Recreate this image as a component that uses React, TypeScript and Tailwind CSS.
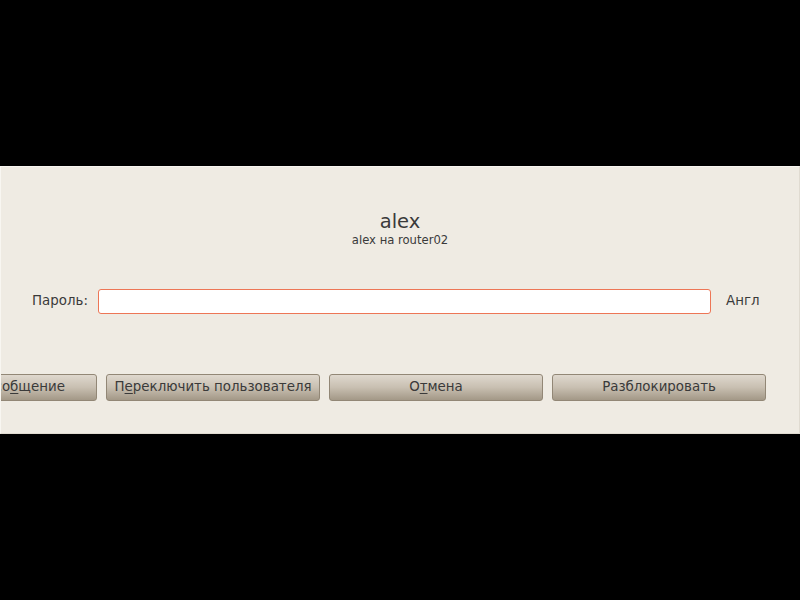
export default function App() {
  const font = { fontFamily: '"DejaVu Sans", "Liberation Sans", sans-serif' };
  const btn =
    "shrink-0 w-[214px] h-[27px] rounded-[3px] border border-[#928776] bg-gradient-to-b from-[#dfd8ce] via-[#c8bfb1] to-[#a39887] text-[13.4px] text-[#3a3a3a] flex items-center justify-center whitespace-nowrap";

  return (
    <div className="w-[800px] h-[600px] bg-black overflow-hidden" style={font}>
      <div className="h-[166px]" />
      <div className="h-[268px] bg-[#efebe3] border-t border-l border-[#f8f6f1] border-r border-b border-r-[#e0dbd1] border-b-[#e0dbd1] overflow-hidden flex flex-col">
        <div className="mt-[44px] text-center text-[19.5px] leading-[22px] text-[#3a3a3a]">alex</div>
        <div className="text-center text-[11.6px] leading-[14px] text-[#3a3a3a]">alex на router02</div>

        <div className="mt-[42px] flex items-center pl-[31px]">
          <span className="text-[13.4px] text-[#3a3a3a] w-[57px]">Пароль:</span>
          <div className="ml-[9px] w-[613px] h-[25px] bg-white rounded-[3px] border border-[#ed7656]" />
          <span className="ml-[15px] text-[13.4px] text-[#3a3a3a]">Англ</span>
        </div>

        <div className="mt-[60px] flex gap-[9px] ml-[-118px]">
          <button className={`${btn} pl-[9px]`}>
            Оставить со<span className="underline underline-offset-2">б</span>щение
          </button>
          <button className={btn}>
            П<span className="underline underline-offset-2">е</span>реключить пользователя
          </button>
          <button className={btn}>
            О<span className="underline underline-offset-2">т</span>мена
          </button>
          <button className={btn}>Разблокировать</button>
        </div>
      </div>
    </div>
  );
}
